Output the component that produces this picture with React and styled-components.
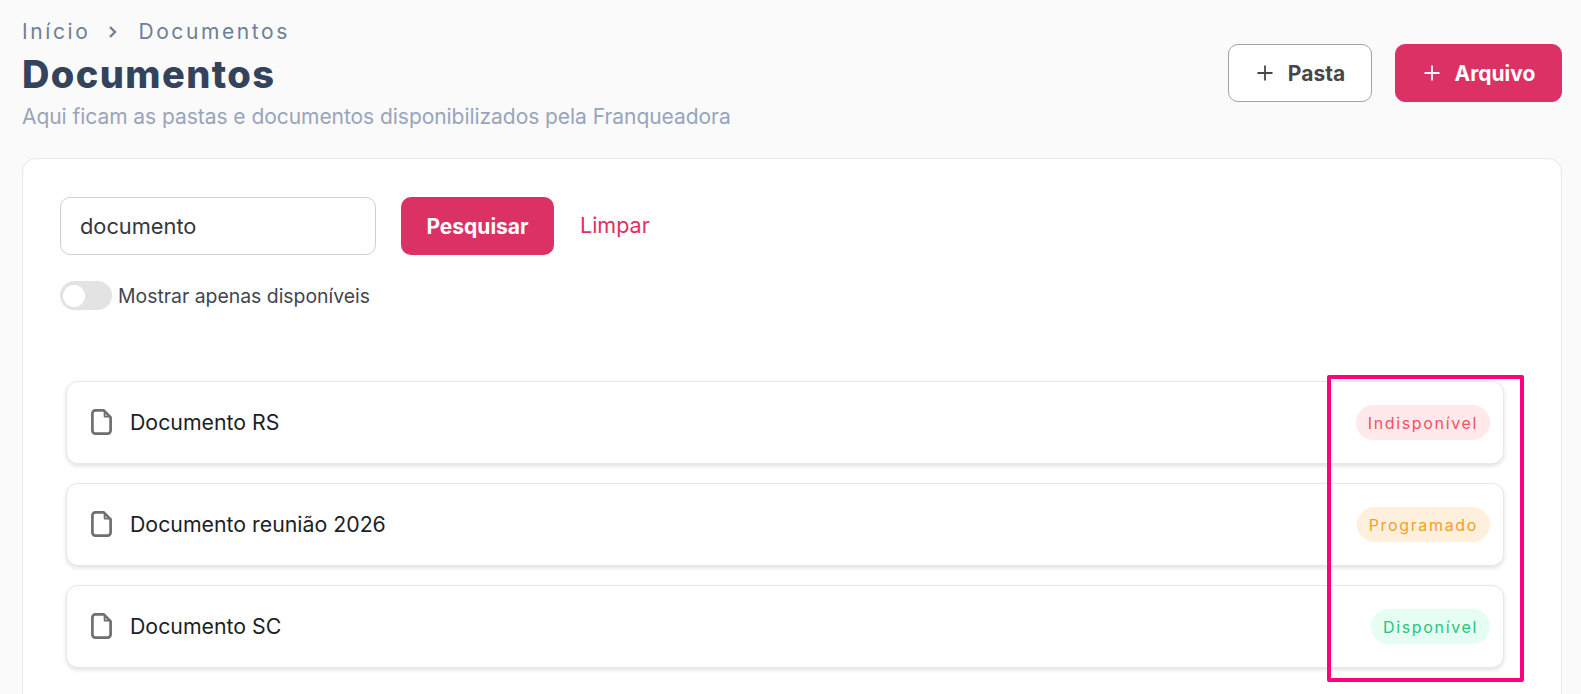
import React from "react";
import styled, { createGlobalStyle } from "styled-components";

const GlobalStyle = createGlobalStyle`
  html, body {
    margin: 0;
    padding: 0;
    background: #fafafa;
    font-family: "Inter", "Liberation Sans", sans-serif;
    overflow: hidden;
  }
  * { box-sizing: border-box; }
`;

const Page = styled.div`
  position: relative;
  height: 694px;
  padding: 21px 19px 0 22px;
  overflow: hidden;
`;

const Header = styled.header`
  display: flex;
  justify-content: space-between;
  align-items: flex-start;
  height: 137px;
`;

const Crumbs = styled.nav`
  display: flex;
  align-items: center;
  height: 21px;
  font-size: 21px;
  letter-spacing: 2.6px;
  color: #6f7f95;
  font-weight: 400;
`;

const CrumbArrow = styled.svg`
  width: 12px;
  height: 14px;
  margin: 0 19px 0 17px;
`;

const Title = styled.h1`
  margin: 10px 0 0;
  font-family: "Inter", sans-serif;
  font-size: 38px;
  line-height: 44px;
  font-weight: 800;
  letter-spacing: 1.4px;
  color: #33435c;
`;

const Subtitle = styled.p`
  margin: 8px 0 0;
  font-size: 21px;
  line-height: 26px;
  letter-spacing: -0.05px;
  color: #98a4ba;
`;

const Actions = styled.div`
  display: flex;
  gap: 23px;
  margin-top: 23px;
`;

const HeaderButton = styled.button`
  display: flex;
  align-items: center;
  justify-content: center;
  gap: 15px;
  width: ${(p) => p.$width}px;
  height: 58px;
  padding: 0 0 0 2px;
  border-radius: 10px;
  font-family: "Inter", sans-serif;
  font-size: 21px;
  font-weight: 700;
  border: 1px solid ${(p) => (p.$primary ? "#dc3164" : "#a3a3a3")};
  background: ${(p) => (p.$primary ? "#dc3164" : "#ffffff")};
  color: ${(p) => (p.$primary ? "#ffffff" : "#474747")};
`;

const Panel = styled.section`
  height: 560px;
  padding: 38px 37px;
  background: #ffffff;
  border: 1px solid #e8e8e8;
  border-radius: 14px;
`;

const SearchRow = styled.div`
  display: flex;
  align-items: center;
`;

const SearchInput = styled.input`
  width: 316px;
  height: 58px;
  padding: 0 19px;
  border: 1px solid #c7d2e2;
  border-radius: 10px;
  background: #ffffff;
  font-family: "Inter", sans-serif;
  font-size: 21.8px;
  color: #33383f;
  outline: none;
`;

const SearchButton = styled.button`
  width: 153px;
  height: 58px;
  margin-left: 25px;
  padding: 0;
  border: 0;
  border-radius: 10px;
  background: #dc3164;
  color: #ffffff;
  font-family: "Inter", sans-serif;
  font-size: 21px;
  font-weight: 700;
`;

const ClearLink = styled.a`
  margin: 0 0 2px 26px;
  font-size: 21.5px;
  color: #dc3164;
`;

const ToggleRow = styled.label`
  display: flex;
  align-items: center;
  gap: 6px;
  margin-top: 26px;
  font-size: 19.4px;
  line-height: 31px;
  height: 29px;
  color: #3f4650;
`;

const ToggleLabel = styled.span`
  padding-top: 2px;
`;

const ToggleTrack = styled.span`
  display: flex;
  align-items: center;
  width: 52px;
  height: 29px;
  padding-left: 3px;
  border-radius: 15px;
  background: #e3e3e3;
`;

const ToggleKnob = styled.span`
  width: 22px;
  height: 22px;
  border-radius: 50%;
  background: #ffffff;
`;

const DocList = styled.ul`
  display: flex;
  flex-direction: column;
  gap: 19px;
  margin: 71px 20px 0 6px;
  padding: 0;
  list-style: none;
`;

const DocRow = styled.li`
  display: flex;
  align-items: center;
  justify-content: space-between;
  height: 83px;
  padding: 0 13px 0 24px;
  background: #ffffff;
  border: 1px solid #e8e8e8;
  border-radius: 12px;
  box-shadow: 0 2px 4px rgba(0, 0, 0, 0.12);
`;

const DocName = styled.div`
  display: flex;
  align-items: center;
  gap: 18px;
  padding-bottom: 2px;
  font-size: 21.3px;
  color: #1c1f26;
`;

const DocIcon = styled.svg`
  width: 21px;
  height: 26px;
`;

const Badge = styled.span`
  display: flex;
  align-items: center;
  height: 35px;
  padding: 0 12px;
  border-radius: 18px;
  font-size: 16px;
  letter-spacing: 1.65px;
  background: ${(p) => p.$bg};
  color: ${(p) => p.$fg};
`;

const Highlight = styled.div`
  position: absolute;
  left: 1327px;
  top: 375px;
  width: 197px;
  height: 307px;
  border: 4px solid #ff007f;
  border-radius: 2px;
  pointer-events: none;
`;

const PlusIcon = () => (
  <svg width="16" height="16" viewBox="0 0 16 16" fill="none" stroke="currentColor" strokeWidth="1.8">
    <path d="M8 0.5v15M0.5 8h15" />
  </svg>
);

const STATUS = {
  Indisponível: { bg: "#ffe9ea", fg: "#ef5263" },
  Programado: { bg: "#ffefdc", fg: "#f5a028" },
  Disponível: { bg: "#e6fdf3", fg: "#25c47d" },
};

const docs = [
  { name: "Documento RS", status: "Indisponível" },
  { name: "Documento reunião 2026", status: "Programado" },
  { name: "Documento SC", status: "Disponível" },
];

export default function App() {
  return (
    <Page>
      <GlobalStyle />
      <Header>
        <div>
          <Crumbs>
            Início
            <CrumbArrow viewBox="0 0 12 14" fill="none" stroke="#6f7f95" strokeWidth="2.4">
              <path d="M3 2l5 5-5 5" />
            </CrumbArrow>
            Documentos
          </Crumbs>
          <Title>Documentos</Title>
          <Subtitle>Aqui ficam as pastas e documentos disponibilizados pela Franqueadora</Subtitle>
        </div>
        <Actions>
          <HeaderButton $width={144}>
            <PlusIcon />
            Pasta
          </HeaderButton>
          <HeaderButton $primary $width={167}>
            <PlusIcon />
            Arquivo
          </HeaderButton>
        </Actions>
      </Header>
      <Panel>
        <SearchRow>
          <SearchInput defaultValue="documento" />
          <SearchButton>Pesquisar</SearchButton>
          <ClearLink>Limpar</ClearLink>
        </SearchRow>
        <ToggleRow>
          <ToggleTrack>
            <ToggleKnob />
          </ToggleTrack>
          <ToggleLabel>Mostrar apenas disponíveis</ToggleLabel>
        </ToggleRow>
        <DocList>
          {docs.map((doc) => (
            <DocRow key={doc.name}>
              <DocName>
                <DocIcon viewBox="0 0 21 26" fill="none" stroke="#6f6f6f" strokeWidth="2.7" strokeLinejoin="round">
                  <path d="M4.4 1.4h8.4l6.8 7v13.2a3 3 0 0 1-3 3H4.4a3 3 0 0 1-3-3V4.4a3 3 0 0 1 3-3z" />
                  <path d="M13.6 3v4.6h5" strokeWidth="1.8" />
                </DocIcon>
                {doc.name}
              </DocName>
              <Badge $bg={STATUS[doc.status].bg} $fg={STATUS[doc.status].fg}>
                {doc.status}
              </Badge>
            </DocRow>
          ))}
        </DocList>
      </Panel>
      <Highlight />
    </Page>
  );
}
